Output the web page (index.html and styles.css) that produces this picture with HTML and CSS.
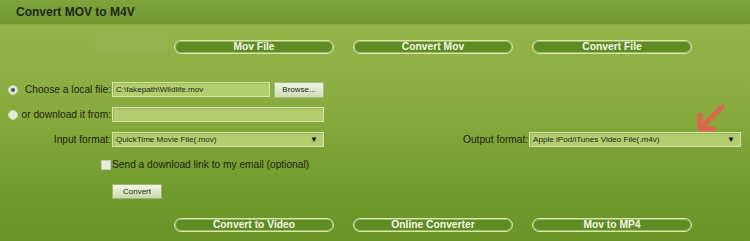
FILE: index.html
```html
<!DOCTYPE html>
<html lang="en">
<head>
    <meta charset="UTF-8">
    <title>Convert MOV to M4V</title>
    <link rel="stylesheet" href="styles.css">
</head>
<body>
    <div class="panel">
        <div class="header">
            <h1>Convert MOV to M4V</h1>
        </div>

        <div class="nav top-nav">
            <span class="ghost"></span>
            <a class="pill">Mov File</a>
            <a class="pill">Convert Mov</a>
            <a class="pill">Convert File</a>
        </div>

        <div class="form">
            <div class="row">
                <div class="label"><span class="radio checked"></span><span>Choose a local file:</span></div>
                <div class="field short">C:\fakepath\Wildlife.mov</div>
                <div class="browse">Browse...</div>
            </div>
            <div class="row">
                <div class="label"><span class="radio"></span><span>or download it from:</span></div>
                <div class="field wide"></div>
            </div>
            <div class="row formats">
                <div class="label end">Input format:</div>
                <div class="field wide select">QuickTime Movie File(.mov)<span class="caret">&#9660;</span></div>
                <div class="out-label">Output format:</div>
                <div class="field wide select">Apple iPod/iTunes Video File(.m4v)<span class="caret">&#9660;</span></div>
                <svg class="pointer" width="32" height="32" viewBox="0 0 32 32">
                    <path d="M28 3 L8 23 M6 11 L6 25 L20 25" fill="none" stroke="#e0654e" stroke-width="5" stroke-linecap="round" stroke-linejoin="round"/>
                </svg>
            </div>
            <div class="row check-row">
                <span class="checkbox"></span><span>Send a download link to my email (optional)</span>
            </div>
            <div class="row submit-row">
                <div class="convert">Convert</div>
            </div>
        </div>

        <div class="nav bottom-nav">
            <a class="pill">Convert to Video</a>
            <a class="pill">Online Converter</a>
            <a class="pill">Mov to MP4</a>
        </div>
    </div>
</body>
</html>
```

FILE: styles.css
```css
:root {
    --text-dark: #1c2610;
    --pill-fill: #5e8b22;
    --pill-line: #d9e8b0;
    --field-bg: #b3cd70;
    --field-line: #d6e6a4;
}

body {
    margin: 0;
    font-family: "Liberation Sans", Arial, sans-serif;
    color: var(--text-dark);
}

.panel {
    width: 750px;
    height: 241px;
    overflow: hidden;
    position: relative;
    background: linear-gradient(180deg, #97b84c 0%, #88ab3f 45%, #709a2c 80%, #6a9428 100%);
}

.header {
    height: 23px;
    background: linear-gradient(180deg, #7ea43c 0%, #71992f 100%);
    box-shadow: 0 1px 1px rgba(60, 90, 20, 0.35);
    display: flex;
    align-items: center;
    padding-left: 16px;
}

.header h1 {
    margin: 0;
    font-size: 12px;
    font-weight: bold;
    color: #1e2812;
}

.nav {
    display: flex;
    gap: 19px;
    padding-left: 174px;
}

.top-nav {
    margin-top: 17px;
    position: relative;
}

.ghost {
    position: absolute;
    left: 95px;
    top: -7px;
    width: 73px;
    height: 22px;
    background: rgba(255, 255, 255, 0.04);
}

.bottom-nav {
    margin-top: 19px;
}

.pill {
    box-sizing: border-box;
    width: 160px;
    height: 14px;
    border: 1px solid var(--pill-line);
    box-shadow: inset 0 0 0 1px rgba(220, 235, 180, 0.5);
    border-radius: 8px;
    background: var(--pill-fill);
    color: #f4f8e6;
    font-size: 10.3px;
    font-weight: bold;
    line-height: 12px;
    text-align: center;
}

.form {
    margin-top: 28px;
    display: flex;
    flex-direction: column;
}

.row {
    display: flex;
    align-items: center;
    height: 15px;
    font-size: 10.2px;
}

.row + .row {
    margin-top: 10px;
}

.label {
    box-sizing: border-box;
    width: 112px;
    padding-left: 8px;
    padding-right: 1px;
    display: flex;
    align-items: center;
    justify-content: space-between;
    white-space: nowrap;
}

.label.end {
    justify-content: flex-end;
}

.radio {
    width: 8px;
    height: 8px;
    border-radius: 50%;
    background: #e3ebd8;
    border: 1px solid #c9d6b6;
    position: relative;
}

.radio.checked::after {
    content: "";
    position: absolute;
    left: 2px;
    top: 2px;
    width: 4px;
    height: 4px;
    border-radius: 50%;
    background: #4a4f6a;
}

.field {
    box-sizing: border-box;
    height: 15px;
    background: var(--field-bg);
    border: 1px solid var(--field-line);
    box-shadow: inset 1px 1px 0 rgba(120, 150, 60, 0.4);
    font-size: 8.1px;
    line-height: 13px;
    padding-left: 3px;
    white-space: nowrap;
}

.field.short {
    width: 158px;
}

.field.wide {
    width: 212px;
}

.select {
    display: flex;
    justify-content: space-between;
    padding-right: 5px;
}

.caret {
    font-size: 8px;
    color: #111;
}

.browse {
    box-sizing: border-box;
    margin-left: 4px;
    width: 50px;
    height: 16px;
    background: linear-gradient(180deg, #eef3e2 0%, #cfdcb6 100%);
    border: 1px solid #a8b98a;
    font-size: 8px;
    line-height: 14px;
    text-align: center;
}

.formats {
    position: relative;
    margin-top: 11px;
}

.out-label {
    margin-left: 139px;
    width: 66px;
    white-space: nowrap;
}

.pointer {
    position: absolute;
    left: 694px;
    top: -28px;
}

.check-row {
    padding-left: 101px;
    margin-top: 9px;
}

.checkbox {
    box-sizing: border-box;
    width: 10px;
    height: 10px;
    margin-right: 1px;
    background: #e6ebe0;
    border: 1px solid #c3cdb3;
}

.submit-row {
    padding-left: 112px;
    height: 16px;
}

.row.submit-row {
    margin-top: 11px;
}

.convert {
    box-sizing: border-box;
    width: 50px;
    height: 15px;
    background: linear-gradient(180deg, #f3f6e8 0%, #c9d8ac 100%);
    border: 1px solid #9fb27e;
    font-size: 8px;
    line-height: 13px;
    text-align: center;
}
```
